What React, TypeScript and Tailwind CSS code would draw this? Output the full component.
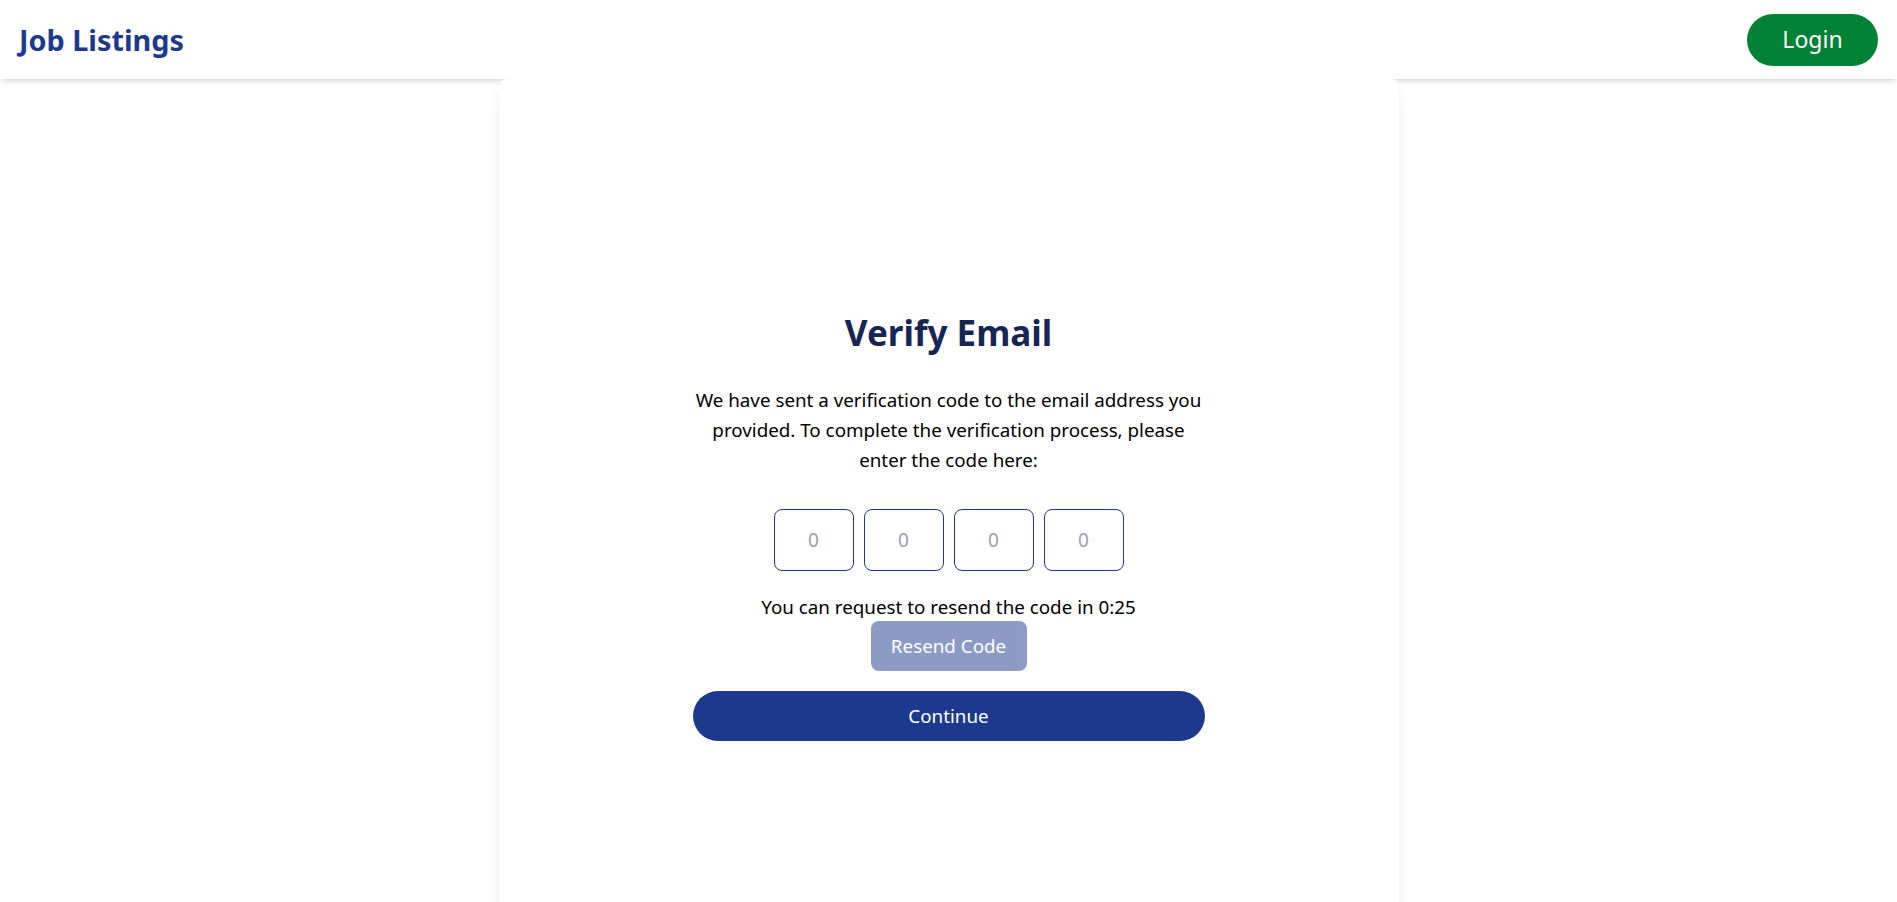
import React, { useState } from 'react';

const font = { fontFamily: '"Noto Sans", "Open Sans", sans-serif' };

const Header: React.FC = () => (
  <header className="relative z-0 flex h-[79px] items-center justify-between bg-white px-[19px] shadow-md">
    <h1 className="text-[28.8px] font-bold text-blue-900">Job Listings</h1>
    <button className="h-[52px] w-[131px] rounded-full bg-green-700 text-[23px] text-white">
      Login
    </button>
  </header>
);

const CodeInputs: React.FC = () => {
  const [code, setCode] = useState(['', '', '', '']);
  return (
    <div className="flex gap-[10px]">
      {code.map((digit, i) => (
        <input
          key={i}
          value={digit}
          maxLength={1}
          placeholder="0"
          onChange={(e) => {
            const next = [...code];
            next[i] = e.target.value;
            setCode(next);
          }}
          className="h-[62px] w-[80px] rounded-lg border border-blue-900 text-center text-[19px] text-slate-700 outline-none placeholder:text-[#9ca0ad]"
        />
      ))}
    </div>
  );
};

export default function App() {
  return (
    <div className="min-h-screen bg-white" style={font}>
      <Header />
      <main className="flex justify-center">
        <div className="relative z-10 flex h-[905px] w-[900px] flex-col items-center rounded-lg bg-white pt-[234px] shadow-lg">
          <h2 className="text-[35px] font-bold leading-[40px] text-[#172554]">Verify Email</h2>
          <p className="mt-8 w-[512px] text-center text-[18.8px] leading-[30px] text-black">
            We have sent a verification code to the email address you
            <br />
            provided. To complete the verification process, please
            <br />
            enter the code here:
          </p>
          <div className="mt-[34px]">
            <CodeInputs />
          </div>
          <p className="mt-[22px] text-[18.8px] leading-[28px] text-black">
            You can request to resend the code in 0:25
          </p>
          <button
            disabled
            className="h-[50px] w-[156px] rounded-lg bg-blue-900 text-[18.8px] text-white opacity-50"
          >
            Resend Code
          </button>
          <button className="mt-5 h-[50px] w-[512px] rounded-full bg-blue-900 text-[18.8px] text-white">
            Continue
          </button>
        </div>
      </main>
    </div>
  );
}
